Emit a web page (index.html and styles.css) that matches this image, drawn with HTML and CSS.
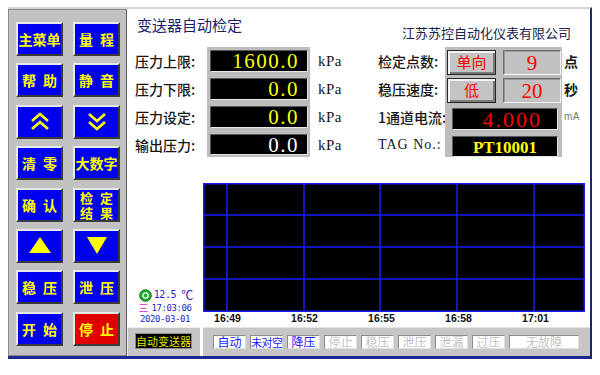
FILE: index.html
```html
<!DOCTYPE html>
<html lang="zh">
<head>
  <meta charset="UTF-8">
  <title>变送器自动检定</title>
  <meta name="viewport" content="width=device-width, initial-scale=1.0">
  <link rel="stylesheet" href="styles.css">
</head>
<body>
  <div class="device">
    <aside class="keys">
      <div class="key">主菜单</div>
      <div class="key sp">量程</div>
      <div class="key sp">帮助</div>
      <div class="key sp">静音</div>
      <div class="key">
        <svg width="20" height="19" viewBox="0 0 20 19"><polyline points="2,9 10,2 18,9"/><polyline points="2,17 10,10 18,17"/></svg>
      </div>
      <div class="key">
        <svg width="20" height="19" viewBox="0 0 20 19"><polyline points="2,2 10,9 18,2"/><polyline points="2,10 10,17 18,10"/></svg>
      </div>
      <div class="key sp">清零</div>
      <div class="key">大数字</div>
      <div class="key sp">确认</div>
      <div class="key two"><span class="sp">检定</span><span class="sp">结果</span></div>
      <div class="key">
        <svg width="22" height="17" viewBox="0 0 22 17"><polygon class="tri" points="0,16 11,0 22,16"/></svg>
      </div>
      <div class="key">
        <svg width="20" height="17" viewBox="0 0 20 17"><polygon class="tri" points="0,0 20,0 10,17"/></svg>
      </div>
      <div class="key sp">稳压</div>
      <div class="key sp">泄压</div>
      <div class="key sp">开始</div>
      <div class="key sp stop">停止</div>
    </aside>

    <main class="screen">
      <header class="head">
        <h1>变送器自动检定</h1>
        <p class="company">江苏苏控自动化仪表有限公司</p>
      </header>

      <section class="params">
        <div class="col labels">
          <div>压力上限:</div>
          <div>压力下限:</div>
          <div>压力设定:</div>
          <div>输出压力:</div>
        </div>
        <div class="frame left-frame">
          <div class="lcd yellow">1600.0</div>
          <div class="lcd yellow">0.0</div>
          <div class="lcd yellow">0.0</div>
          <div class="lcd white last">0.0</div>
        </div>
        <div class="col units">
          <div>kPa</div>
          <div>kPa</div>
          <div>kPa</div>
          <div>kPa</div>
        </div>

        <div class="col labels right-labels">
          <div>检定点数:</div>
          <div>稳压速度:</div>
          <div>1通道电流:</div>
          <div class="latin">TAG No.:</div>
        </div>
        <div class="frame right-frame">
          <div class="pair">
            <div class="btn">单向</div>
            <div class="box">9</div>
          </div>
          <div class="pair">
            <div class="btn">低</div>
            <div class="box">20</div>
          </div>
          <div class="lcd red wide">4.000</div>
          <div class="lcd tag wide last">PT10001</div>
        </div>
        <div class="col units right-units">
          <div>点</div>
          <div>秒</div>
          <div class="ma">mA</div>
          <div></div>
        </div>
      </section>

      <section class="mid">
        <div class="info">
          <div class="temp">
            <svg width="13" height="13" viewBox="0 0 13 13"><circle cx="6.5" cy="6.5" r="5.8" fill="#22b02a" stroke="#137018" stroke-width="1"/><circle cx="6.5" cy="6.5" r="2.6" fill="none" stroke="#fff" stroke-width="1.3"/></svg>
            <span>12.5</span><span class="deg">℃</span>
          </div>
          <div class="clock"><span class="day">三</span><span>17:03:06</span></div>
          <div class="date">2020-03-01</div>
        </div>
        <div class="chart">
          <svg class="plot" width="382" height="129" viewBox="0 0 382 129">
            <rect x="0" y="0" width="382" height="129" fill="#000"/>
            <g stroke="#1a1aff" stroke-width="1.5">
              <line x1="24" y1="0" x2="24" y2="129"/>
              <line x1="101" y1="0" x2="101" y2="129"/>
              <line x1="177" y1="0" x2="177" y2="129"/>
              <line x1="254" y1="0" x2="254" y2="129"/>
              <line x1="331" y1="0" x2="331" y2="129"/>
              <line x1="0" y1="32" x2="382" y2="32"/>
              <line x1="0" y1="64" x2="382" y2="64"/>
              <line x1="0" y1="96" x2="382" y2="96"/>
              <rect x="0.75" y="0.75" width="380.5" height="127.5" fill="none"/>
            </g>
          </svg>
          <div class="axis">
            <span>16:49</span>
            <span>16:52</span>
            <span>16:55</span>
            <span>16:58</span>
            <span>17:01</span>
          </div>
        </div>
      </section>

      <footer class="status">
        <div class="brand"><div class="mode">自动变送器</div></div>
        <div class="lamps">
          <div class="lamp on">自动</div>
          <div class="lamp on small">未对空</div>
          <div class="lamp on">降压</div>
          <div class="lamp">停止</div>
          <div class="lamp">稳压</div>
          <div class="lamp">泄压</div>
          <div class="lamp">泄漏</div>
          <div class="lamp">过压</div>
          <div class="lamp fault">无故障</div>
        </div>
      </footer>
    </main>
  </div>
</body>
</html>
```

FILE: styles.css
```css
* {
  box-sizing: border-box;
}
body {
  margin: 0;
  background: #fff;
  font-family: "Noto Sans CJK SC", "Liberation Sans", sans-serif;
  color: #161616;
}
.device {
  display: flex;
  width: 584px;
  height: 352px;
  margin: 7px 0 0 8px;
  border-top: 2px solid #d2d2d2;
  border-right: 2px solid #1d2966;
  border-bottom: 3px solid #1b2a8c;
}

/* left key panel */
.keys {
  width: 119px;
  background: #c2c2c2;
  border: 1px solid #8a8a8a;
  border-right-color: #5e5e5e;
  padding: 12px 0 0 7px;
  display: grid;
  grid-template-columns: 47px 47px;
  grid-auto-rows: 34px;
  column-gap: 10px;
  row-gap: 7.4px;
  align-content: start;
}
.key {
  display: flex;
  align-items: center;
  justify-content: center;
  background: #0000f0;
  color: #ffff00;
  font-size: 14px;
  font-weight: 700;
  line-height: 1;
  white-space: nowrap;
  border: 2px solid;
  border-color: #e8e8e8 #3a3a3a #3a3a3a #e8e8e8;
}
.key.sp,
.key .sp {
  letter-spacing: 7px;
  text-indent: 7px;
}
.key.two {
  flex-direction: column;
  font-size: 13px;
}
.key.two span {
  display: block;
  height: 15px;
  line-height: 15px;
}
.key.stop {
  background: #e00000;
}
.key svg polyline {
  fill: none;
  stroke: #ffff00;
  stroke-width: 2.6;
}
.key svg .tri {
  fill: #ffff00;
}

/* main screen */
.screen {
  flex: 1;
  background: #fff;
  display: flex;
  flex-direction: column;
}
.head {
  height: 38px;
  display: flex;
  justify-content: space-between;
  align-items: flex-start;
}
.head h1 {
  margin: 8px 0 0 10px;
  font-size: 15px;
  line-height: 15px;
  font-weight: 400;
  color: #1c1c6c;
}
.company {
  margin: 17px 19px 0 0;
  font-size: 13px;
  line-height: 13px;
  color: #20204a;
}

.params {
  height: 110px;
  display: flex;
  padding-left: 8px;
}
.col > div {
  height: 28px;
  line-height: 28px;
  white-space: nowrap;
}
.labels {
  width: 72px;
  font-size: 14px;
  font-weight: 500;
}
.labels .latin {
  font-family: "Liberation Serif", serif;
  font-size: 14px;
  letter-spacing: 1px;
}
.units {
  width: 60px;
  margin-left: 8px;
  font-family: "Liberation Serif", serif;
  font-size: 15px;
  letter-spacing: 0.5px;
}
.right-labels {
  width: 67px;
}
.right-units {
  width: 22px;
  margin-left: 2px;
  font-family: "Noto Sans CJK SC", sans-serif;
  font-size: 14px;
  font-weight: 700;
}
.right-units .ma {
  font-family: "Liberation Sans", sans-serif;
  font-size: 10px;
  font-weight: 400;
  color: #777;
}

.frame {
  background: #bdbdbd;
  display: flex;
  flex-direction: column;
}
.left-frame {
  width: 103px;
  padding: 3px 2px 0 3px;
  gap: 6px;
}
.right-frame {
  width: 117px;
  padding: 3px 1px 0 2px;
}
.lcd {
  height: 22px;
  background: #000;
  border: 1px solid;
  border-color: #5a5a5a #e6e6e6 #e6e6e6 #5a5a5a;
  font-family: "Liberation Serif", serif;
  font-size: 21px;
  line-height: 21px;
  letter-spacing: 1.5px;
  text-align: right;
  padding-right: 8px;
}
.lcd.last {
  height: 21px;
}
.yellow {
  color: #ffff00;
}
.white {
  color: #fff;
}
.lcd.red {
  color: #ff0000;
  font-size: 22px;
  letter-spacing: 2px;
  padding-right: 15px;
  margin-top: 2px;
}
.lcd.tag {
  color: #ffff00;
  font-size: 17px;
  font-weight: 700;
  text-align: center;
  padding-right: 0;
  letter-spacing: 0;
  margin-top: 6px;
}
.lcd.wide {
  width: 106px;
  margin-left: 5px;
}
.pair {
  display: flex;
  gap: 7px;
  height: 25px;
  margin-bottom: 3px;
}
.btn {
  width: 49px;
  background: #c4c4c4;
  border: 1px solid #262626;
  box-shadow: inset 2px 2px 0 #f2f2f2, inset -2px -2px 0 #7a7a7a;
  color: #ff0000;
  font-size: 15px;
  line-height: 22px;
  text-align: center;
}
.box {
  width: 58px;
  background: #c2c2c2;
  border: 1px solid;
  border-color: #6c6c6c #f4f4f4 #f4f4f4 #6c6c6c;
  box-shadow: inset 1px 1px 0 #9a9a9a;
  color: #ff0000;
  font-family: "Liberation Serif", serif;
  font-size: 21px;
  line-height: 24px;
  text-align: center;
}

/* chart row */
.mid {
  height: 170px;
  display: flex;
}
.info {
  width: 76px;
  display: flex;
  flex-direction: column;
  justify-content: flex-end;
  align-items: center;
  padding-bottom: 2px;
  color: #2424c8;
  font-family: "DejaVu Sans Mono", monospace;
  font-size: 9px;
  letter-spacing: -0.4px;
}
.info > div {
  white-space: nowrap;
}
.temp {
  height: 14px;
  line-height: 14px;
  display: flex;
  align-items: center;
  gap: 2px;
  font-size: 10px;
  margin-left: 2px;
}
.temp .deg {
  font-family: "Noto Sans CJK SC", sans-serif;
  font-size: 12px;
  letter-spacing: 0;
  margin-left: 3px;
}
.clock {
  height: 12px;
  line-height: 12px;
  display: flex;
  align-items: center;
}
.clock .day {
  color: #d024d0;
  font-family: "Noto Sans CJK SC", sans-serif;
  font-size: 10px;
  line-height: 12px;
  letter-spacing: 0;
  margin-right: 3px;
}
.date {
  height: 11px;
  line-height: 11px;
}
.chart {
  width: 382px;
  padding-top: 26px;
}
.plot {
  display: block;
}
.axis {
  display: flex;
  margin-left: -14px;
  height: 15px;
}
.axis span {
  width: 77px;
  text-align: center;
  font-family: "Liberation Sans", sans-serif;
  font-weight: 700;
  font-size: 10.5px;
  line-height: 13px;
  color: #111;
}

/* status bar */
.status {
  height: 29px;
  display: flex;
}
.brand {
  width: 73px;
  background: #c6c6c6;
  border-top: 1px solid #efefef;
  border-left: 1px solid #efefef;
  padding: 5px 0 0 7px;
}
.mode {
  width: 57px;
  height: 16px;
  background: #000;
  border: 1px solid #8a8a8a;
  color: #e6e600;
  font-size: 11px;
  line-height: 14px;
  text-align: center;
}
.lamps {
  flex: 1;
  margin-left: 3px;
  background: #c6c6c6;
  border-top: 1px solid #e4e4e4;
  padding: 7px 0 0 10px;
  display: flex;
  gap: 4px;
}
.lamp {
  width: 33px;
  height: 14px;
  background: #fff;
  border: 1px solid;
  border-color: #8c8c8c #dedede #dedede #8c8c8c;
  color: #c4c4c4;
  font-size: 12px;
  line-height: 12px;
  text-align: center;
  white-space: nowrap;
}
.lamp.on {
  color: #1a1aff;
}
.lamp.small {
  font-size: 11px;
  letter-spacing: -0.5px;
  text-align: left;
}
.lamp.fault {
  width: 70px;
}
```
